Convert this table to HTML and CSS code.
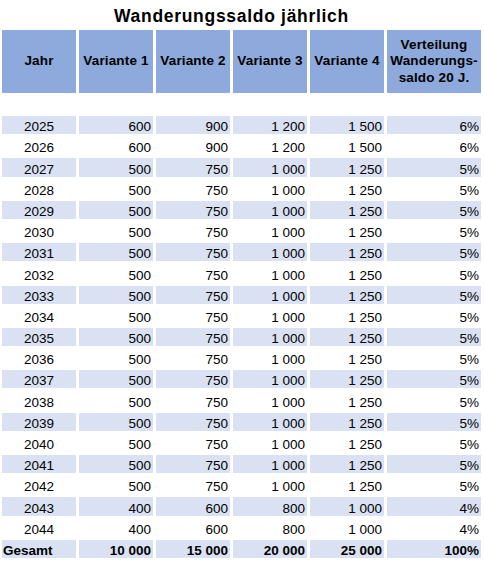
FILE: index.html
```html
<!DOCTYPE html>
<html lang="de">
<head>
<meta charset="utf-8" />
<title>Wanderungssaldo jährlich</title>
<link rel="stylesheet" href="styles.css">
</head>
<body>
<div class="sheet">
    <h1 class="title">Wanderungssaldo jährlich</h1>
    <div class="grid">
        <div class="row head">
            <div>Jahr</div>
            <div>Variante 1</div>
            <div>Variante 2</div>
            <div>Variante 3</div>
            <div>Variante 4</div>
            <div>Verteilung Wanderungs-<br />saldo 20 J.</div>
        </div>
        <div class="row blank"></div>
        <div class="row odd"><div>2025</div><div>600</div><div>900</div><div>1 200</div><div>1 500</div><div>6%</div></div>
        <div class="row"><div>2026</div><div>600</div><div>900</div><div>1 200</div><div>1 500</div><div>6%</div></div>
        <div class="row odd"><div>2027</div><div>500</div><div>750</div><div>1 000</div><div>1 250</div><div>5%</div></div>
        <div class="row"><div>2028</div><div>500</div><div>750</div><div>1 000</div><div>1 250</div><div>5%</div></div>
        <div class="row odd"><div>2029</div><div>500</div><div>750</div><div>1 000</div><div>1 250</div><div>5%</div></div>
        <div class="row"><div>2030</div><div>500</div><div>750</div><div>1 000</div><div>1 250</div><div>5%</div></div>
        <div class="row odd"><div>2031</div><div>500</div><div>750</div><div>1 000</div><div>1 250</div><div>5%</div></div>
        <div class="row"><div>2032</div><div>500</div><div>750</div><div>1 000</div><div>1 250</div><div>5%</div></div>
        <div class="row odd"><div>2033</div><div>500</div><div>750</div><div>1 000</div><div>1 250</div><div>5%</div></div>
        <div class="row"><div>2034</div><div>500</div><div>750</div><div>1 000</div><div>1 250</div><div>5%</div></div>
        <div class="row odd"><div>2035</div><div>500</div><div>750</div><div>1 000</div><div>1 250</div><div>5%</div></div>
        <div class="row"><div>2036</div><div>500</div><div>750</div><div>1 000</div><div>1 250</div><div>5%</div></div>
        <div class="row odd"><div>2037</div><div>500</div><div>750</div><div>1 000</div><div>1 250</div><div>5%</div></div>
        <div class="row"><div>2038</div><div>500</div><div>750</div><div>1 000</div><div>1 250</div><div>5%</div></div>
        <div class="row odd"><div>2039</div><div>500</div><div>750</div><div>1 000</div><div>1 250</div><div>5%</div></div>
        <div class="row"><div>2040</div><div>500</div><div>750</div><div>1 000</div><div>1 250</div><div>5%</div></div>
        <div class="row odd"><div>2041</div><div>500</div><div>750</div><div>1 000</div><div>1 250</div><div>5%</div></div>
        <div class="row"><div>2042</div><div>500</div><div>750</div><div>1 000</div><div>1 250</div><div>5%</div></div>
        <div class="row odd"><div>2043</div><div>400</div><div>600</div><div>800</div><div>1 000</div><div>4%</div></div>
        <div class="row"><div>2044</div><div>400</div><div>600</div><div>800</div><div>1 000</div><div>4%</div></div>
        <div class="row odd total"><div>Gesamt</div><div>10 000</div><div>15 000</div><div>20 000</div><div>25 000</div><div>100%</div></div>
    </div>
</div>
</body>
</html>
```

FILE: styles.css
```css
*{margin:0; padding:0;}
body{background:#fff; color:#000; font-family:"Liberation Sans", Arial, sans-serif;}
.sheet{width:479px; padding-left:2px;}
.title{height:27px; padding:3px 0 0 112px; font-size:17.5px; line-height:27px; font-weight:bold; letter-spacing:0.7px;}

.grid{display:flex; flex-direction:column; gap:3px;}
.row{display:grid; grid-template-columns:repeat(5, 74px) 94px; column-gap:3px; height:18.2px; font-size:13.5px; line-height:15px;}
.row div{display:flex; align-items:flex-end; justify-content:flex-end; padding:0 2px 0 0; white-space:nowrap;}
.row div:first-child{justify-content:center; padding:0;}
.odd div{background:#d9e1f2;}

.head{height:63px; font-weight:bold; letter-spacing:0.15px;}
.head div{background:#8ea9db; align-items:center; justify-content:center; text-align:center; padding:0; line-height:16.5px; white-space:normal;}
.blank{height:17px;}

.total{font-weight:bold;}
.total div:first-child{justify-content:flex-start; padding-left:1px;}
```
